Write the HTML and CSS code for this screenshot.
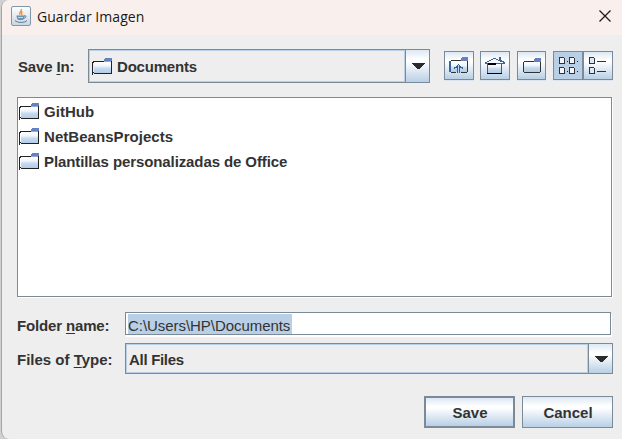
FILE: index.html
```html
<!DOCTYPE html>
<html lang="en">
<head>
<meta charset="utf-8">
<title>Guardar Imagen</title>
<link rel="stylesheet" href="styles.css">
</head>
<body>
<svg width="0" height="0" class="defs">
  <defs>
    <linearGradient id="paper" x1="0" y1="0" x2="0" y2="1"><stop offset="0" stop-color="#fff"/><stop offset=".35" stop-color="#f0f5fc"/><stop offset=".6" stop-color="#c5d8ee"/><stop offset="1" stop-color="#b4cde7"/></linearGradient>
    <symbol id="folder" viewBox="0 0 20 17">
      <g shape-rendering="crispEdges">
      <rect x="2" y="4" width="17" height="11" fill="url(#paper)"/>
      <path d="M0 4h1v13H0zM1 3h1v2H1zM1 14h1v1H1zM2 3h10v1H2zM2 15h18v1H2zM19 3h1v13h-1z" fill="#222"/>
      <rect x="13" y="0" width="7" height="3" fill="#6382bf"/><rect x="12" y="1" width="1" height="3" fill="#6382bf"/><rect x="12" y="3" width="7" height="1" fill="#8fa8d6"/>
      </g>
    </symbol>
  </defs>
</svg>
<main class="window">
  <header class="titlebar">
    <svg class="java" width="20" height="20" viewBox="0 0 20 20">
      <defs><linearGradient id="tile" x1="0" y1="0" x2="0" y2="1"><stop offset="0" stop-color="#fff"/><stop offset="1" stop-color="#c9d5df"/></linearGradient></defs>
      <rect x=".5" y=".5" width="19" height="19" rx="1.5" fill="url(#tile)" stroke="#7f97aa"/>
      <path d="M10 3c2 2-3 3-1 6M11.500 5.500c-3 2 1 2-1 4" fill="none" stroke="#ef913f" stroke-width="1.400"/>
      <path d="M5.500 9.500h8c0 3-1 4-2 4.500h-4c-1-.5-2-2-2-4.500z" fill="#6c91ae"/>
      <path d="M13 10c3-1 2.500 2-.5 2.500M4 14.500c2 2.500 10 2.500 12 0M7 11.500h5" fill="none" stroke="#557e9f"/>
      <path d="M7 11.500h5" stroke="#c7d8e5"/>
    </svg>
    <h1>Guardar Imagen</h1>
    <svg class="close" width="12" height="12" viewBox="0 0 12 12"><path d="M.5.5l11 11M11.500.5l-11 11" stroke="#191919" stroke-width="1.200"/></svg>
  </header>
  <div class="toolbar">
    <span class="label save-in">Save <u>I</u>n:</span>
    <div class="combo location">
      <div class="value"><svg width="20" height="17"><use href="#folder"/></svg><span class="docs">Documents</span></div>
      <div class="arrow"><svg width="13" height="7" viewBox="0 0 13 7" shape-rendering="crispEdges"><path d="M0 0h13v1h-1v1h-1v1h-1v1H9v1H8v1H5V5H4V4H3V3H2V2H1V1H0z" fill="#2b2b2b"/></svg></div>
    </div>
    <div class="tool up"><svg width="20" height="17" viewBox="0 0 20 17" shape-rendering="crispEdges">
      <rect x="2" y="5" width="16" height="10" fill="url(#paper)"/><path d="M0 4h2v11H0z" fill="#3467a0"/><path d="M2 3h10v1H2zM2 15h5v1H2zM12 15h6v1h-6zM18 3h1v12h-1z" fill="#333"/><rect x="13" y="0" width="6" height="4" fill="#6382bf"/><rect x="12" y="1" width="1" height="3" fill="#6382bf"/><path d="M9 7h1v1h1v1h1v1h2v2h-1v-1h-2v5H8v-5H6v1H5v-2h2V9h1V8h1z" fill="#2d6292"/><path d="M9 8h1v8H9z" fill="#bfd8f1"/></svg></div>
    <div class="tool home"><svg width="20" height="17" viewBox="0 0 20 17" shape-rendering="crispEdges">
      <rect x="3" y="6" width="14" height="10" fill="url(#paper)"/><path d="M0 5h2V4h2V3h2V2h2V1h3v1h2v1h1V0h2v3h1v1h2v1h2v2H0z" fill="#3467a0"/><path d="M2 5h2V4h2V3h2V2h3v1h2v1h2v1h3v1H2z" fill="#f7fbff"/><path d="M2 7h1v9H2zM16 7h1v9h-1z" fill="#2d6292"/><path d="M3 6h8v2H3zM2 16h15v1H2z" fill="#000"/></svg></div>
    <div class="tool new"><svg width="18" height="16" viewBox="0 0 18 16" shape-rendering="crispEdges">
      <rect x="1" y="4" width="16" height="10" fill="url(#paper)"/><path d="M1 3h10v1H1zM0 4h1v10H0zM1 14h16v1H1zM17 3h1v11h-1z" fill="#333"/><rect x="12" y="0" width="6" height="4" fill="#6382bf"/><rect x="11" y="1" width="1" height="3" fill="#6382bf"/></svg></div>
    <div class="toggles">
      <div class="tool on"><svg width="20" height="17" viewBox="0 0 20 17" shape-rendering="crispEdges"><g fill="#eef5fc" stroke="#333"><path d="M.5.5h4l1 1v5h-5zM10.500.5h4l1 1v5h-5zM.5 10.500h4l1 1v5h-5zM10.500 10.500h4l1 1v5h-5z"/></g><path d="M8 4h1v1H8zM18 4h1v1h-1zM8 14h1v1H8zM18 14h1v1h-1z" fill="#222"/></svg></div>
      <div class="tool details"><svg width="18" height="17" viewBox="0 0 18 17" shape-rendering="crispEdges"><path d="M.5.5h4l1 1v5h-5zM.5 10.500h4l1 1v5h-5z" fill="#dce9f7" stroke="#333"/><path d="M8 4h9v1H8zM8 14h9v1H8z" fill="#333"/></svg></div>
    </div>
  </div>
  <ul class="files">
    <li><svg width="20" height="17"><use href="#folder"/></svg><span class="f1">GitHub</span></li>
    <li><svg width="20" height="17"><use href="#folder"/></svg><span class="f2">NetBeansProjects</span></li>
    <li><svg width="20" height="17"><use href="#folder"/></svg><span class="f3">Plantillas personalizadas de Office</span></li>
  </ul>
  <div class="row name-row">
    <span class="label">Folder <u>n</u>ame:</span>
    <div class="input"><span>C:\Users\HP\Documents</span></div>
  </div>
  <div class="row type-row">
    <span class="label">Files of <u>T</u>ype:</span>
    <div class="combo type"><div class="value">All Files</div>
      <div class="arrow"><svg width="13" height="7" viewBox="0 0 13 7" shape-rendering="crispEdges"><path d="M0 0h13v1h-1v1h-1v1h-1v1H9v1H8v1H5V5H4V4H3V3H2V2H1V1H0z" fill="#2b2b2b"/></svg></div></div>
  </div>
  <footer class="actions">
    <div class="button primary">Save</div>
    <div class="button">Cancel</div>
  </footer>
</main>
</body>
</html>
```
FILE: styles.css
```css
* { box-sizing: border-box; }
html, body { margin: 0; height: 439px; overflow: hidden; background: #d0d0d0; }
body { font: bold 15px/18px "Liberation Sans", Arial, sans-serif; color: #333; padding-left: 1px; }
svg { display: block; flex: none; }
.defs { position: absolute; }
u { text-decoration: underline; text-decoration-thickness: 1px; text-underline-offset: 2px; }
.window { width: 629px; height: 439px; background: #eee; border-left: 1px solid #a5a5a5; border-radius: 8px 0 0 8px; overflow: hidden; }
.titlebar { height: 35px; width: 620px; background: #f9f0ee; display: flex; align-items: center; padding: 0 11px 4px 9px; }
.titlebar h1 { flex: 1; margin: 2px 0 0 6px; font: 14px/20px "Open Sans", "Noto Sans", sans-serif; color: #191919; letter-spacing: .05px; }
.toolbar { display: flex; height: 34px; margin: 14px 0 0 15px; width: 596px; align-items: flex-start; }
.label { white-space: nowrap; }
.save-in { width: 71px; padding: 9px 0 0 1px; letter-spacing: -.15px; }
.combo { display: flex; border: 1px solid #7a8a99; }
.location { width: 342px; height: 34px; margin-right: 14px; }
.value { flex: 1; border: 1px solid #b8cfe5; display: flex; align-items: center; }
.location .value { padding-left: 2px; gap: 5px; }
.docs { padding-top: 2px; letter-spacing: -.2px; }
.arrow { width: 24px; border-left: 1px solid #7a8a99; display: grid; place-items: center; padding: 1px 0 0 1px; }
.arrow, .tool, .button { background: linear-gradient(#dde8f3 0, #fff 30%, #fff 36%, #b8cfe5 100%); }
.tool { width: 30px; height: 29px; margin-top: 2px; border: 1px solid #7a8a99; display: grid; place-items: center; box-shadow: 0 1px #dae5f0; }
.up { margin-right: 6px; }
.home { margin-right: 7px; }
.new { width: 29px; margin-right: 7px; }
.toggles { display: flex; }
.tool.on { background: #b8cfe5; padding-left: 1px; }
.files { list-style: none; width: 595px; height: 200px; margin: 14px 0 0 15px; padding: 1px 0 0 1px; background: #fff; border: 1px solid #7a8a99; box-shadow: 1px 1px #fff; }
.files li { height: 25px; display: flex; align-items: center; gap: 5px; }
.f1 { letter-spacing: .05px; }
.f2 { letter-spacing: .05px; }
.f3 { letter-spacing: -.1px; }
.row { display: flex; margin-left: 15px; }
.row .label { width: 108px; }
.name-row { margin-top: 15px; height: 23px; }
.name-row .label { padding-top: 5px; letter-spacing: -.15px; }
.input { width: 486px; height: 23px; border: 1px solid #7a8a99; background: #fff; padding: 1px 2px; box-shadow: 1px 2px #fff; font-weight: normal; line-height: 20px; }
.input span { display: block; background: #b8cfe5; height: 20px; width: 164px; white-space: nowrap; padding-top: 2px; letter-spacing: -.05px; }
.type-row { margin-top: 8px; height: 31px; }
.type-row .label { padding-top: 8px; }
.type { width: 488px; height: 31px; }
.type .value { padding: 2px 0 0 2px; letter-spacing: -.3px; }
.actions { display: flex; gap: 7px; margin: 22px 0 0 422px; }
.button { width: 91px; height: 32px; border: 1px solid #7a8a99; display: grid; place-items: center; padding: 1px 0 0 1px; }
.primary { border-width: 2px; }
```
